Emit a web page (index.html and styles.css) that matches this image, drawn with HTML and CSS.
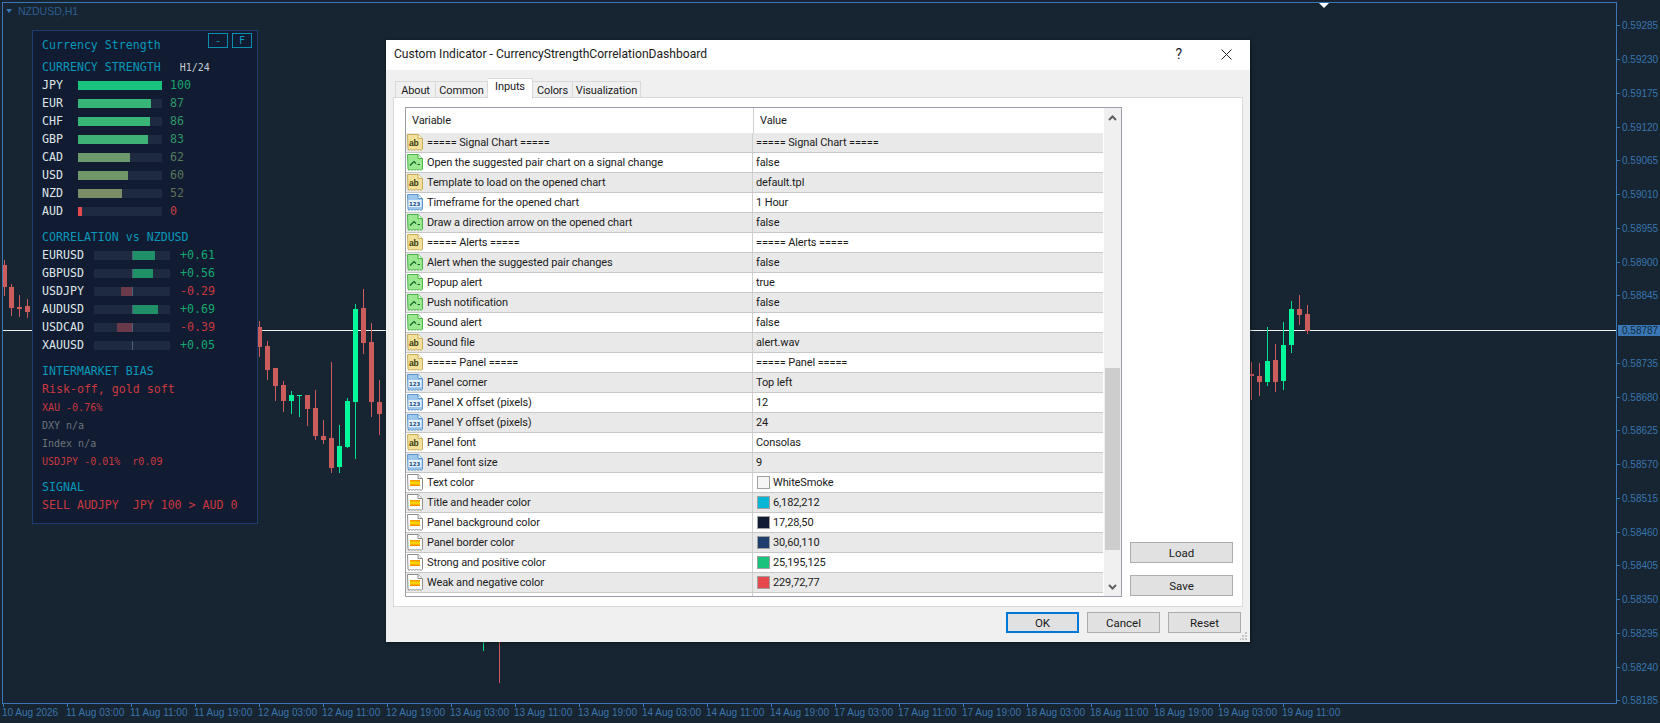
FILE: index.html
```html
<!DOCTYPE html>
<html>

<head>
  <meta charset="UTF-8">
  <title>Custom Indicator - CurrencyStrengthCorrelationDashboard</title>
  <link rel="stylesheet" href="styles.css">
</head>

<body>
  <svg class="defs" width="0" height="0">
    <defs>
      <linearGradient id="heat" x1="0" y1="0" x2="0" y2="1">
        <stop offset="0" stop-color="#ff8a00" />
        <stop offset="0.5" stop-color="#ffe400" />
        <stop offset="1" stop-color="#ff7a00" />
      </linearGradient>
      <symbol id="i-ab" viewBox="0 0 16 17">
        <path d="M.5 .5H11L15.5 4.5V15l-1.5 1.5-1.5-1.5-1.5 1.5-1.5-1.5-1.5 1.5-1.5-1.5-1.5 1.5-1.5-1.5-1.5 1.5-1-1.5z" fill="#f3e199" stroke="#c6ae5c" />
        <path d="M11 .5V4.5H15.5" fill="#fff8d8" stroke="#c6ae5c" />
        <text x="2" y="11.5" class="ico-ab">ab</text>
      </symbol>
      <symbol id="i-bool" viewBox="0 0 16 17">
        <path d="M.5 .5H11L15.5 4.5V15l-1.5 1.5-1.5-1.5-1.5 1.5-1.5-1.5-1.5 1.5-1.5-1.5-1.5 1.5-1.5-1.5-1.5 1.5-1-1.5z" fill="#9be891" stroke="#4cb34c" />
        <path d="M11 .5V4.5H15.5" fill="#dcfbd6" stroke="#4cb34c" />
        <path d="M3 11.5L7 7.5L9 9.5M10.5 10.5H13" fill="none" stroke="#14602a" stroke-width="1.2" />
      </symbol>
      <symbol id="i-num" viewBox="0 0 16 17">
        <path d="M.5 .5H11L15.5 4.5V15l-1.5 1.5-1.5-1.5-1.5 1.5-1.5-1.5-1.5 1.5-1.5-1.5-1.5 1.5-1.5-1.5-1.5 1.5-1-1.5z" fill="#9fc8ee" stroke="#5e97cc" />
        <path d="M11 .5V4.5H15.5" fill="#e2f0fb" stroke="#5e97cc" />
        <rect x="1.5" y="6" width="13" height="7" fill="#e6f2fb" />
        <text x="2" y="12" class="ico-num">123</text>
      </symbol>
      <symbol id="i-color" viewBox="0 0 16 17">
        <path d="M.5 .5H11L15.5 4.5V15l-1.5 1.5-1.5-1.5-1.5 1.5-1.5-1.5-1.5 1.5-1.5-1.5-1.5 1.5-1.5-1.5-1.5 1.5-1-1.5z" fill="#fff" stroke="#8d8d8d" />
        <path d="M11 .5V4.5H15.5" fill="#f2f2f2" stroke="#8d8d8d" />
        <rect x="3" y="6" width="10" height="6" fill="url(#heat)" />
      </symbol>
    </defs>
  </svg>

  <div class="terminal">
    <div class="chart">
      <svg class="candles" width="1660" height="723" viewBox="0 0 1660 723">
        <path class="price-line" d="M0 327.5H1613" />
        <path class="wick-dn" d="M1.5 257V293M8.5 281V313M16.5 292V314M24.5 296V315M256.5 318V354M264.5 338V377M272.5 365V398M280.5 378V409M304.5 392V423M312.5 387V437M320.5 417V441M328.5 359V470M360.5 286V351M368.5 320V414M376.5 377V432M496.5 600V680M1248.5 359V397M1256.5 360V393M1272.5 341V389M1296.5 292V322M1304.5 302V331" />
        <path class="wick-up" d="M288.5 388V411M296.5 392V414M336.5 422V470M344.5 395V445M352.5 301V456M480.5 600V648M1264.5 324V383M1280.5 319V387M1288.5 298V350" />
        <path class="body-dn" d="M-1 262h5v22h-5zM6 284h5v21h-5zM14 304h5v2h-5zM22 303h5v6h-5zM254 324h5v20h-5zM262 343h5v24h-5zM270 365h5v18h-5zM278 382h5v16h-5zM302 392h5v14h-5zM310 405h5v28h-5zM318 433h5v4h-5zM326 435h5v30h-5zM358 305h5v35h-5zM366 339h5v60h-5zM374 399h5v12h-5zM1246 371h5v2h-5zM1254 373h5v6h-5zM1270 357h5v22h-5zM1294 306h5v6h-5zM1302 311h5v17h-5z" />
        <path class="body-up" d="M286 392h5v6h-5zM294 392h5v1h-5zM334 443h5v21h-5zM342 398h5v46h-5zM350 306h5v93h-5zM1262 358h5v21h-5zM1278 342h5v36h-5zM1286 306h5v36h-5z" />
        <path class="marker" d="M1316 0h10l-5 5z" />
      </svg>
      <div class="chart-label">
        <span class="chart-arrow"></span>
        <span>NZDUSD,H1</span>
      </div>
    </div>

    <div class="price-axis">
      <div class="price">0.59285</div>
      <div class="price">0.59230</div>
      <div class="price">0.59175</div>
      <div class="price">0.59120</div>
      <div class="price">0.59065</div>
      <div class="price">0.59010</div>
      <div class="price">0.58955</div>
      <div class="price">0.58900</div>
      <div class="price">0.58845</div>
      <div class="price price-now">0.58787</div>
      <div class="price">0.58735</div>
      <div class="price">0.58680</div>
      <div class="price">0.58625</div>
      <div class="price">0.58570</div>
      <div class="price">0.58515</div>
      <div class="price">0.58460</div>
      <div class="price">0.58405</div>
      <div class="price">0.58350</div>
      <div class="price">0.58295</div>
      <div class="price">0.58240</div>
      <div class="price">0.58185</div>
    </div>

    <div class="time-axis">
      <div class="time">10 Aug 2026</div>
      <div class="time">11 Aug 03:00</div>
      <div class="time">11 Aug 11:00</div>
      <div class="time">11 Aug 19:00</div>
      <div class="time">12 Aug 03:00</div>
      <div class="time">12 Aug 11:00</div>
      <div class="time">12 Aug 19:00</div>
      <div class="time">13 Aug 03:00</div>
      <div class="time">13 Aug 11:00</div>
      <div class="time">13 Aug 19:00</div>
      <div class="time">14 Aug 03:00</div>
      <div class="time">14 Aug 11:00</div>
      <div class="time">14 Aug 19:00</div>
      <div class="time">17 Aug 03:00</div>
      <div class="time">17 Aug 11:00</div>
      <div class="time">17 Aug 19:00</div>
      <div class="time">18 Aug 03:00</div>
      <div class="time">18 Aug 11:00</div>
      <div class="time">18 Aug 19:00</div>
      <div class="time">19 Aug 03:00</div>
      <div class="time">19 Aug 11:00</div>
    </div>
  </div>

  <!-- dashboard drawn by the indicator -->
  <div class="panel">
    <div class="panel-btns">
      <div class="panel-btn">-</div>
      <div class="panel-btn">F</div>
    </div>
    <div class="line head panel-title">Currency Strength</div>
    <div class="line head">CURRENCY STRENGTH<span class="tf">H1/24</span></div>

    <div class="line strength"><span class="sym">JPY</span><div class="track"><div class="fill" style="width: 100%; background: #19c37d"></div></div><span class="num" style="color: #19a56d">100</span></div>
    <div class="line strength"><span class="sym">EUR</span><div class="track"><div class="fill" style="width: 87%; background: #37b678"></div></div><span class="num" style="color: #2f9767">87</span></div>
    <div class="line strength"><span class="sym">CHF</span><div class="track"><div class="fill" style="width: 86%; background: #39b578"></div></div><span class="num" style="color: #2f9667">86</span></div>
    <div class="line strength"><span class="sym">GBP</span><div class="track"><div class="fill" style="width: 83%; background: #3eb277"></div></div><span class="num" style="color: #339366">83</span></div>
    <div class="line strength"><span class="sym">CAD</span><div class="track"><div class="fill" style="width: 62%; background: #6b9a6b"></div></div><span class="num" style="color: #557a5c">62</span></div>
    <div class="line strength"><span class="sym">USD</span><div class="track"><div class="fill" style="width: 60%; background: #6f976a"></div></div><span class="num" style="color: #58785b">60</span></div>
    <div class="line strength"><span class="sym">NZD</span><div class="track"><div class="fill" style="width: 52%; background: #7c8d65"></div></div><span class="num" style="color: #637058">52</span></div>
    <div class="line strength"><span class="sym">AUD</span><div class="track"><div class="fill" style="width: 4px; background: #e5484d"></div></div><span class="num" style="color: #c43f46">0</span></div>

    <div class="line head block">CORRELATION vs NZDUSD</div>
    <div class="line corr"><span class="sym">EURUSD</span><div class="track"><div class="leg pos" style="width: 30.5%"></div></div><span class="num up">+0.61</span></div>
    <div class="line corr"><span class="sym">GBPUSD</span><div class="track"><div class="leg pos" style="width: 28%"></div></div><span class="num up">+0.56</span></div>
    <div class="line corr"><span class="sym">USDJPY</span><div class="track"><div class="leg neg" style="width: 14.5%"></div></div><span class="num down">-0.29</span></div>
    <div class="line corr"><span class="sym">AUDUSD</span><div class="track"><div class="leg pos" style="width: 34.5%"></div></div><span class="num up">+0.69</span></div>
    <div class="line corr"><span class="sym">USDCAD</span><div class="track"><div class="leg neg" style="width: 19.5%"></div></div><span class="num down">-0.39</span></div>
    <div class="line corr"><span class="sym">XAUUSD</span><div class="track"><div class="leg pos" style="width: 1px"></div></div><span class="num up">+0.05</span></div>

    <div class="line head block">INTERMARKET BIAS</div>
    <div class="line down">Risk-off, gold soft</div>
    <div class="line small down">XAU -0.76%</div>
    <div class="line small muted">DXY n/a</div>
    <div class="line small muted">Index n/a</div>
    <div class="line small down">USDJPY -0.01%&nbsp;&nbsp;r0.09</div>

    <div class="line head block">SIGNAL</div>
    <div class="line down">SELL AUDJPY&nbsp;&nbsp;JPY 100 &gt; AUD 0</div>
  </div>

  <div class="dialog">
    <div class="titlebar">
      <div class="title">Custom Indicator - CurrencyStrengthCorrelationDashboard</div>
      <div class="help">?</div>
      <svg class="close" width="11" height="11" viewBox="0 0 11 11">
        <path d="M.5 .5L10.5 10.5M10.5 .5L.5 10.5" />
      </svg>
    </div>

    <div class="tabs">
      <div class="tab tab-about">About</div>
      <div class="tab tab-common">Common</div>
      <div class="tab tab-inputs active">Inputs</div>
      <div class="tab tab-colors">Colors</div>
      <div class="tab tab-vis">Visualization</div>
    </div>

    <div class="tab-body">
      <div class="table">
        <div class="grid">
          <div class="grid-head">
            <div class="col-name">Variable</div>
            <div class="col-value">Value</div>
          </div>

          <div class="row"><div class="name"><svg class="ico"><use href="#i-ab" /></svg>===== Signal Chart =====</div><div class="value">===== Signal Chart =====</div></div>
          <div class="row"><div class="name"><svg class="ico"><use href="#i-bool" /></svg>Open the suggested pair chart on a signal change</div><div class="value">false</div></div>
          <div class="row"><div class="name"><svg class="ico"><use href="#i-ab" /></svg>Template to load on the opened chart</div><div class="value">default.tpl</div></div>
          <div class="row"><div class="name"><svg class="ico"><use href="#i-num" /></svg>Timeframe for the opened chart</div><div class="value">1 Hour</div></div>
          <div class="row"><div class="name"><svg class="ico"><use href="#i-bool" /></svg>Draw a direction arrow on the opened chart</div><div class="value">false</div></div>
          <div class="row"><div class="name"><svg class="ico"><use href="#i-ab" /></svg>===== Alerts =====</div><div class="value">===== Alerts =====</div></div>
          <div class="row"><div class="name"><svg class="ico"><use href="#i-bool" /></svg>Alert when the suggested pair changes</div><div class="value">false</div></div>
          <div class="row"><div class="name"><svg class="ico"><use href="#i-bool" /></svg>Popup alert</div><div class="value">true</div></div>
          <div class="row"><div class="name"><svg class="ico"><use href="#i-bool" /></svg>Push notification</div><div class="value">false</div></div>
          <div class="row"><div class="name"><svg class="ico"><use href="#i-bool" /></svg>Sound alert</div><div class="value">false</div></div>
          <div class="row"><div class="name"><svg class="ico"><use href="#i-ab" /></svg>Sound file</div><div class="value">alert.wav</div></div>
          <div class="row"><div class="name"><svg class="ico"><use href="#i-ab" /></svg>===== Panel =====</div><div class="value">===== Panel =====</div></div>
          <div class="row"><div class="name"><svg class="ico"><use href="#i-num" /></svg>Panel corner</div><div class="value">Top left</div></div>
          <div class="row"><div class="name"><svg class="ico"><use href="#i-num" /></svg>Panel X offset (pixels)</div><div class="value">12</div></div>
          <div class="row"><div class="name"><svg class="ico"><use href="#i-num" /></svg>Panel Y offset (pixels)</div><div class="value">24</div></div>
          <div class="row"><div class="name"><svg class="ico"><use href="#i-ab" /></svg>Panel font</div><div class="value">Consolas</div></div>
          <div class="row"><div class="name"><svg class="ico"><use href="#i-num" /></svg>Panel font size</div><div class="value">9</div></div>
          <div class="row"><div class="name"><svg class="ico"><use href="#i-color" /></svg>Text color</div><div class="value"><span class="swatch" style="background: #f5f5f5"></span>WhiteSmoke</div></div>
          <div class="row"><div class="name"><svg class="ico"><use href="#i-color" /></svg>Title and header color</div><div class="value"><span class="swatch" style="background: #06b6d4"></span>6,182,212</div></div>
          <div class="row"><div class="name"><svg class="ico"><use href="#i-color" /></svg>Panel background color</div><div class="value"><span class="swatch" style="background: #111c32"></span>17,28,50</div></div>
          <div class="row"><div class="name"><svg class="ico"><use href="#i-color" /></svg>Panel border color</div><div class="value"><span class="swatch" style="background: #1e3c6e"></span>30,60,110</div></div>
          <div class="row"><div class="name"><svg class="ico"><use href="#i-color" /></svg>Strong and positive color</div><div class="value"><span class="swatch" style="background: #19c37d"></span>25,195,125</div></div>
          <div class="row"><div class="name"><svg class="ico"><use href="#i-color" /></svg>Weak and negative color</div><div class="value"><span class="swatch" style="background: #e5484d"></span>229,72,77</div></div>
          <div class="row"><div class="name"></div><div class="value"></div></div>
        </div>

        <div class="scrollbar">
          <svg class="chevron" width="9" height="6" viewBox="0 0 9 6"><path d="M1 5L4.5 1.5L8 5" /></svg>
          <div class="thumb"></div>
          <svg class="chevron chevron-end" width="9" height="6" viewBox="0 0 9 6"><path d="M1 1L4.5 4.5L8 1" /></svg>
        </div>
      </div>

      <div class="side">
        <button class="btn btn-side">Load</button>
        <button class="btn btn-side">Save</button>
      </div>
    </div>

    <div class="footer">
      <button class="btn btn-foot btn-default">OK</button>
      <button class="btn btn-foot">Cancel</button>
      <button class="btn btn-foot">Reset</button>
    </div>

    <svg class="grip" width="8" height="8" viewBox="0 0 8 8">
      <path d="M5 0h2v2h-2zM2 3h2v2h-2zM5 3h2v2h-2zM-1 6h2v2h-2zM2 6h2v2h-2zM5 6h2v2h-2z" />
    </svg>
  </div>
</body>

</html>
```

FILE: styles.css
```css
body {
  margin: 0;
  width: 1660px;
  height: 723px;
  overflow: hidden;
  position: relative;
  background: #162531;
  font-family: 'Liberation Sans', Arial, sans-serif;
}

.defs {
  position: absolute;
}

/* chart window */
.terminal {
  display: grid;
  grid-template-columns: 1615px 43px;
  grid-template-rows: 702px 19px;
  padding: 2px 0 0 2px;
  color: #3a74ad;
  font-size: 10px;
}

.chart {
  position: relative;
  border: 1px solid #3a78b5;
}

.candles {
  position: absolute;
  left: 0;
  top: 0;
}

.price-line {
  stroke: #f2f2f2;
  fill: none;
}

.wick-dn {
  stroke: #cd5c5c;
  fill: none;
}

.wick-up {
  stroke: #00e08c;
  fill: none;
}

.body-dn {
  fill: #cd5c5c;
}

.body-up {
  fill: #00fa9a;
}

.marker {
  fill: #fff;
}

.chart-label {
  position: absolute;
  left: 3px;
  top: 0;
  display: flex;
  align-items: center;
  gap: 6px;
  height: 15px;
  color: #2f5f92;
  font-size: 10.5px;
}

.chart-arrow {
  width: 0;
  height: 0;
  border-left: 3.5px solid transparent;
  border-right: 3.5px solid transparent;
  border-top: 4px solid #3a78b5;
}

.price-axis {
  display: flex;
  flex-direction: column;
  padding-top: 7px;
}

.price {
  display: flex;
  align-items: center;
  flex: 0 0 33.75px;
  white-space: nowrap;
}

.price::before {
  content: "";
  width: 3px;
  height: 1px;
  margin-right: 2px;
  background: #3a78b5;
}

.price-now {
  flex-basis: 11px;
  margin: 12px 0 10.75px 1px;
  padding-left: 4px;
  background: #3a78b5;
  color: #14283a;
}

.price-now::before {
  display: none;
}

.time-axis {
  grid-column: 1 / 3;
  display: flex;
}

.time {
  flex: 0 0 64px;
  white-space: nowrap;
}

.time::before {
  content: "";
  display: block;
  width: 1px;
  height: 3px;
  margin-left: 1px;
  background: #3a78b5;
}

/* indicator panel */
.panel {
  position: absolute;
  left: 32px;
  top: 30px;
  width: 207px;
  padding: 5px 8px 9px 9px;
  background: #111c32;
  border: 1px solid #1e3c6e;
  font-family: 'DejaVu Sans Mono', 'Liberation Mono', monospace;
  font-size: 11.6px;
  color: #dfe4e8;
}

.panel-btns {
  position: absolute;
  top: 2px;
  right: 5px;
  display: flex;
  gap: 4px;
}

.panel-btn {
  width: 18px;
  height: 13px;
  border: 1px solid #0a8fb0;
  color: #0a9cc0;
  font-size: 10px;
  line-height: 13px;
  text-align: center;
}

.line {
  display: flex;
  align-items: center;
  height: 18px;
  white-space: pre;
}

.head {
  color: #0797b9;
}

.panel-title {
  margin-bottom: 4px;
}

.block {
  margin-top: 8px;
}

.tf {
  margin-left: 19px;
  color: #c4ccd2;
  font-size: 10px;
}

.sym {
  flex: none;
}

.strength .sym {
  width: 36px;
}

.corr .sym {
  width: 52px;
}

.track {
  position: relative;
  height: 9px;
  background: #1d2a40;
}

.strength .track {
  width: 84px;
}

.corr .track {
  width: 76px;
}

.fill {
  height: 100%;
}

.corr .track::after {
  content: "";
  position: absolute;
  left: 38px;
  top: 0;
  width: 1px;
  height: 100%;
  background: #4d5f7b;
}

.leg {
  position: absolute;
  top: 0;
  height: 100%;
}

.pos {
  left: 50%;
  background: #1f9068;
}

.neg {
  right: 50%;
  background: #6b3a4a;
}

.strength .num {
  margin-left: 8px;
}

.corr .num {
  margin-left: 10px;
}

.up {
  color: #15a86f;
}

.down {
  color: #c8383f;
}

.small {
  font-size: 10px;
}

.muted {
  color: #6d737c;
}

/* properties dialog */
.dialog {
  position: absolute;
  left: 386px;
  top: 40px;
  display: flex;
  flex-direction: column;
  width: 864px;
  height: 602px;
  background: #f0f0f0;
  box-shadow: 1px 1px 4px rgba(0, 0, 0, 0.45);
  color: #1a1a1a;
  font-family: Roboto, 'Liberation Sans', sans-serif;
  font-size: 11px;
  letter-spacing: -0.12px;
}

.titlebar {
  display: flex;
  align-items: center;
  flex: none;
  height: 28px;
  padding: 0 18px 2px 8px;
  background: #fff;
}

.title {
  flex: 1;
  font-size: 12.1px;
  letter-spacing: 0;
}

.help {
  margin-right: 39px;
  font-size: 14px;
}

.close path {
  stroke: #222;
  fill: none;
}

.tabs {
  display: flex;
  align-items: flex-end;
  flex: none;
  position: relative;
  z-index: 1;
  height: 20px;
  margin: 8px 0 -1px;
  padding-left: 9px;
}

.tab {
  height: 17px;
  line-height: 17px;
  text-align: center;
  border: 1px solid #d9d9d9;
  border-bottom: none;
  border-left: none;
  box-sizing: border-box;
}

.tab-about {
  width: 41px;
  border-left: 1px solid #d9d9d9;
}

.tab-common {
  width: 52px;
}

.tab-inputs {
  width: 45px;
}

.tab-colors {
  width: 40px;
}

.tab-vis {
  width: 68px;
}

.tab.active {
  height: 21px;
  line-height: 15px;
  margin-bottom: -1px;
  background: #fff;
}

.tab-body {
  display: flex;
  flex: none;
  box-sizing: border-box;
  height: 510px;
  margin: 0 7px;
  padding: 9px 0 0 11px;
  background: #fff;
  border: 1px solid #d9d9d9;
}

.table {
  display: flex;
  flex: none;
  width: 715px;
  height: 488px;
  border: 1px solid #9a9fa8;
  overflow: hidden;
}

.grid {
  flex: 1;
  min-width: 0;
}

.grid-head {
  display: flex;
  align-items: center;
  height: 25px;
}

.col-name {
  width: 341px;
  height: 100%;
  padding-left: 6px;
  line-height: 26px;
  border-right: 1px solid #d0d0d0;
}

.col-value {
  padding-left: 6px;
}

.row {
  display: flex;
  align-items: center;
  height: 20px;
  box-sizing: border-box;
  border-bottom: 1px solid #c8c8c8;
}

.row:nth-child(even) {
  background: #e9e9e9;
}

.row:last-child {
  background: #fff;
  border-bottom: none;
}

.name {
  display: flex;
  align-items: center;
  gap: 4px;
  box-sizing: border-box;
  width: 347px;
  height: 100%;
  padding-left: 1px;
  border-right: 1px solid #d0d0d0;
  white-space: nowrap;
}

.value {
  display: flex;
  align-items: center;
  gap: 3px;
  padding-left: 3px;
  white-space: nowrap;
}

.ico {
  flex: none;
  width: 16px;
  height: 17px;
}

.ico-ab {
  font: bold 8.5px 'Liberation Sans', sans-serif;
  fill: #3a3a10;
}

.ico-num {
  font: bold 5.5px 'DejaVu Sans', sans-serif;
  fill: #1b4f86;
}

.swatch {
  flex: none;
  width: 11px;
  height: 11px;
  margin-left: 1px;
  border: 1px solid #a0a0a0;
}

.scrollbar {
  display: flex;
  flex-direction: column;
  align-items: center;
  flex: none;
  width: 17px;
  background: #f0f0f0;
  border-left: 1px solid #fff;
}

.chevron {
  flex: none;
  margin-top: 7px;
}

.chevron path {
  fill: none;
  stroke: #606060;
  stroke-width: 2;
}

.chevron-end {
  margin-top: auto;
  margin-bottom: 6px;
}

.thumb {
  flex: none;
  width: 15px;
  height: 182px;
  margin-top: 247px;
  background: #cdcdcd;
}

.side {
  display: flex;
  flex-direction: column;
  justify-content: flex-end;
  gap: 12px;
  flex: none;
  width: 103px;
  margin-left: 8px;
  padding-bottom: 10px;
}

.btn {
  box-sizing: border-box;
  padding: 0;
  background: #e1e1e1;
  border: 1px solid #adadad;
  color: #1a1a1a;
  font-family: inherit;
  font-size: 11.5px;
}

.btn-side {
  height: 21px;
}

.footer {
  display: flex;
  justify-content: flex-end;
  gap: 8px;
  flex: none;
  margin-top: 5px;
  padding-right: 9px;
}

.btn-foot {
  width: 73px;
  height: 21px;
}

.btn-default {
  border: 2px solid #0078d7;
}

.grip {
  position: absolute;
  right: 2px;
  bottom: 2px;
}

.grip path {
  fill: #c4c4c4;
}
```
